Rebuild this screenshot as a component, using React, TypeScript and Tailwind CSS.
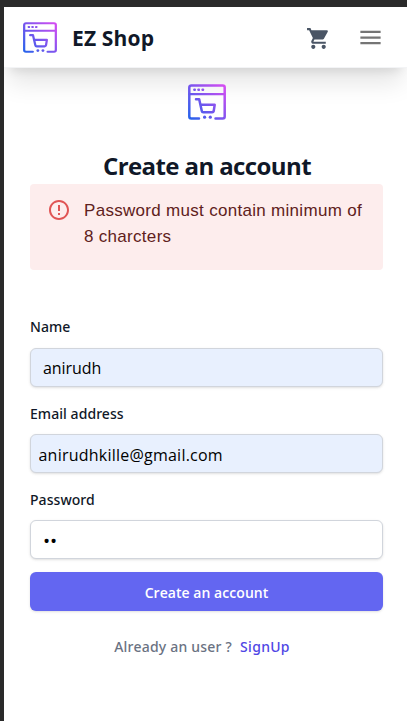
import React from "react";

function Logo({ id, className }: { id: string; className: string }) {
  return (
    <svg viewBox="0 0 38 36" preserveAspectRatio="none" className={className} fill="none">
      <defs>
        <linearGradient id={id} x1="1" y1="35" x2="37" y2="1" gradientUnits="userSpaceOnUse">
          <stop offset="0" stopColor="#2563eb" />
          <stop offset="0.45" stopColor="#7456ee" />
          <stop offset="1" stopColor="#d84df2" />
        </linearGradient>
      </defs>
      <g stroke={`url(#${id})`} strokeWidth="2.5" strokeLinecap="round" strokeLinejoin="round">
        <path d="M11 34.600H3.300a2 2 0 0 1-2-2V3.400a2 2 0 0 1 2-2h31.400a2 2 0 0 1 2 2v29.200a2 2 0 0 1-2 2H27.500" />
        <path d="M1.500 10.200h35" strokeWidth="2.300" />
        <path d="M8 15.300h3.200l2.600 11.800a1.500 1.500 0 0 0 1.500 1.200h8.900a1.600 1.600 0 0 0 1.500-1.200L26.700 20.700H12.600" />
      </g>
      <g fill={`url(#${id})`}>
        <rect x="5.300" y="4.500" width="2.600" height="2.600" rx="0.800" />
        <rect x="9.400" y="4.500" width="2.600" height="2.600" rx="0.800" />
        <rect x="13.500" y="4.500" width="2.600" height="2.600" rx="0.800" />
        <circle cx="16.600" cy="33.200" r="1.600" />
        <circle cx="22.300" cy="33.200" r="1.600" />
      </g>
    </svg>
  );
}

const fieldStyle =
  "block h-[39px] w-full rounded-md border border-gray-300 text-black shadow-sm outline-none";
const labelStyle =
  "block h-6 font-['Noto_Sans',sans-serif] text-[14px] leading-6 font-medium tracking-[0.06px] whitespace-nowrap text-gray-900";

export default function App() {
  return (
    <div className="h-[721px] w-[407px] overflow-hidden border-t-[7px] border-l-4 border-[#2a2a2a] bg-white font-['Open_Sans','Noto_Sans',sans-serif]">
      <header className="flex h-[61px] items-center border-b border-gray-100 bg-white pl-[19px] shadow-xl">
        <Logo id="nav-logo" className="h-[31px] w-[34px]" />
        <span className="ml-[15px] pt-0.5 text-[21px] leading-8 font-bold tracking-[0.15px] whitespace-nowrap text-gray-900">
          EZ Shop
        </span>
        <button aria-label="Cart" className="mr-[26px] ml-auto pt-[3px] text-gray-600">
          <svg viewBox="0 0 24 24" className="h-[25px] w-[25px]" fill="currentColor">
            <path d="M7 18c-1.100 0-1.990.9-1.990 2S5.900 22 7 22s2-.9 2-2-.9-2-2-2zM1 2v2h2l3.600 7.590-1.350 2.450c-.16.28-.25.61-.25.96 0 1.100.9 2 2 2h12v-2H7.420c-.14 0-.25-.11-.25-.25l.03-.12.9-1.630h7.450c.75 0 1.410-.41 1.750-1.030l3.580-6.490A1 1 0 0 0 20 4H5.210l-.94-2H1zm16 16c-1.100 0-1.990.9-1.990 2s.89 2 1.990 2 2-.9 2-2-.9-2-2-2z" />
          </svg>
        </button>
        <button aria-label="Menu" className="mr-[23px] text-[#757575]">
          <svg viewBox="0 0 24 24" className="h-[27px] w-[27px]" fill="currentColor">
            <path d="M3 18h18v-2H3v2zm0-5h18v-2H3v2zm0-7v2h18V6H3z" />
          </svg>
        </button>
      </header>

      <main className="pr-6 pl-[26px]">
        <Logo id="page-logo" className="mx-auto mt-4 h-9 w-[38px]" />
        <h1 className="mt-[30px] h-[34px] pl-px text-center text-[24px] leading-[32px] font-bold tracking-[-0.6px] whitespace-nowrap text-gray-900">
          Create an account
        </h1>
        <div className="flex h-[86px] rounded bg-[#fdeded] pt-[14px] pl-[17px] text-[#5f2120]">
          <svg viewBox="0 0 24 24" className="h-[24px] w-[24px] shrink-0 text-[#e05454]" fill="currentColor">
            <path d="M11 15h2v2h-2zm0-8h2v6h-2zm.99-5C6.470 2 2 6.480 2 12s4.470 10 9.990 10C17.520 22 22 17.520 22 12S17.520 2 11.990 2zM12 20c-4.420 0-8-3.580-8-8s3.580-8 8-8 8 3.580 8 8-3.580 8-8 8z" />
          </svg>
          <p className="ml-[13px] font-['Liberation_Sans',Arial,sans-serif] text-[17px] leading-[26px] tracking-[0.3px] whitespace-nowrap">
            Password must contain minimum of
            <br />8 charcters
          </p>
        </div>

        <form className="mt-[45px]">
          <label className={labelStyle}>Name</label>
          <input
            readOnly
            defaultValue="anirudh"
            className={`${fieldStyle} mt-[9px] bg-[#e8f0fe] px-3 text-[16px] tracking-[-0.05px]`}
          />
          <label className={`${labelStyle} mt-[15px]`}>Email address</label>
          <input
            readOnly
            defaultValue="anirudhkille@gmail.com"
            className={`${fieldStyle} mt-2 bg-[#e8f0fe] px-[7.5px] pt-0.5 text-[16px] tracking-[0.23px]`}
          />
          <label className={`${labelStyle} mt-[15px]`}>Password</label>
          <input
            readOnly
            type="password"
            defaultValue="ab"
            className={`${fieldStyle} mt-2 bg-white px-3 pt-0.5 text-[19px] tracking-[-0.2px]`}
          />
          <button
            type="button"
            className="mt-[13px] block h-[39px] w-full rounded-md bg-[#6366f1] pt-0.5 text-center text-[14px] leading-6 font-semibold tracking-[0.05px] whitespace-nowrap text-white shadow-sm"
          >
            Create an account
          </button>
        </form>
        <p className="mt-6 flex h-6 justify-center gap-2 pr-[9px] font-['Noto_Sans',sans-serif] text-[14px] leading-6 font-medium whitespace-nowrap text-gray-500">
          <span className="tracking-[0.22px]">Already an user ?</span>
          <a className="tracking-[0.3px] text-[#4f46e5]">SignUp</a>
        </p>
      </main>
    </div>
  );
}
